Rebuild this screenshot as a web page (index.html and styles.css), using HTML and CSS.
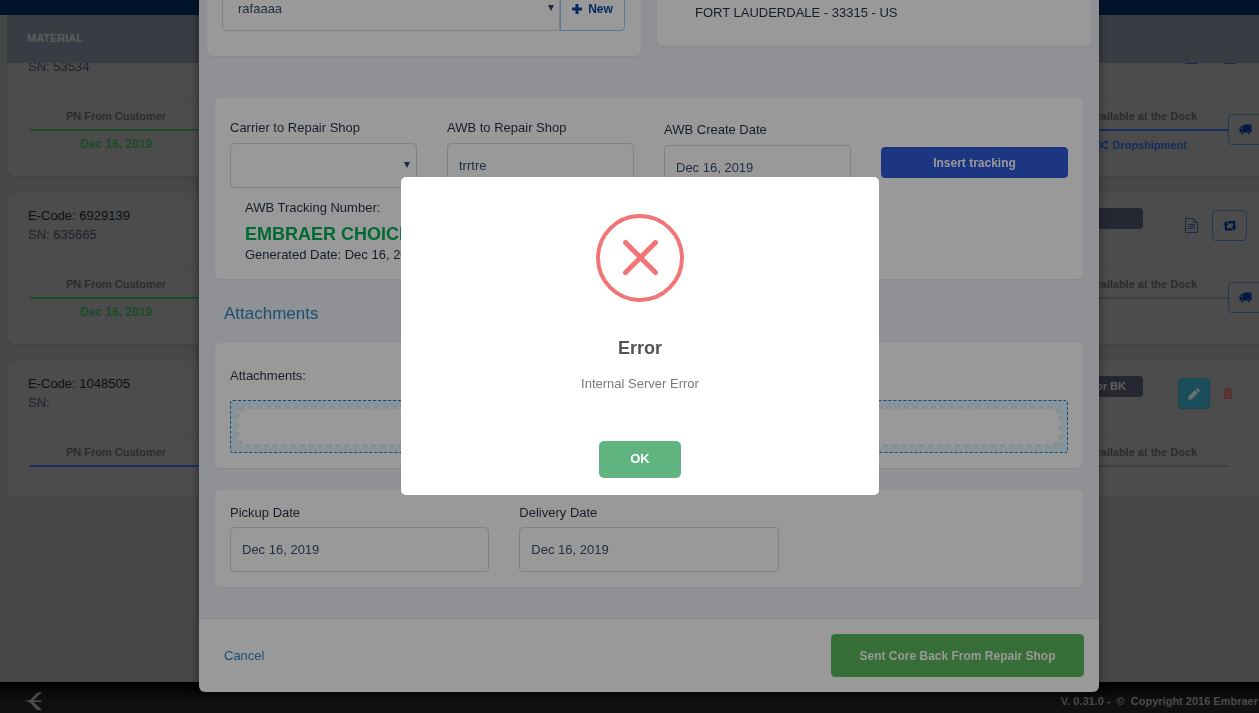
FILE: index.html
```html
<!DOCTYPE html>
<html lang="en">
<head>
<meta charset="utf-8">
<title>Core return</title>
<link rel="stylesheet" href="styles.css">
</head>
<body>
<svg class="sprite" aria-hidden="true">
  <symbol id="truck" viewBox="0 0 13 11"><path d="M4.500 0.500H12.500V8.500H.5V5L2.300 2H4.500ZM2.700 3.200 1.700 5H3.800V3.200Z" fill-rule="evenodd"/><circle cx="3.600" cy="8.800" r="1.500" stroke="#4c4c4c" stroke-width=".6"/><circle cx="9.600" cy="8.800" r="1.500" stroke="#4c4c4c" stroke-width=".6"/></symbol>
  <symbol id="doc" viewBox="0 0 13 15"><path d="M.5.500H8.500L12.500 4.500V14.500H.5ZM8.500.500V4.500H12.500M3 6.500H10M3 8.500H10M3 10.500H10" fill="none" stroke="currentColor"/></symbol>
  <symbol id="retweet" viewBox="0 0 14 10"><path d="M3 0 6 4H4V7H8L10 9.500H1.800V4H0ZM11 9.500 8 5.500H10V2.500H6L4.500 0H12.200V5.500H14Z"/></symbol>
  <symbol id="shuffle" viewBox="0 0 12 10"><path d="M0 2H2.500L7.500 8H10M0 8H2.500L7.500 2H10" fill="none" stroke="currentColor" stroke-width="1.500"/><path d="M9 0 12 2 9 4ZM9 6 12 8 9 10Z"/></symbol>
  <symbol id="pencil" viewBox="0 0 12 12"><path d="M0 12 .8 8.300 7 2.100 9.900 5 3.700 11.200ZM7.700 1.400 8.700.400Q9.300 0 9.900.500L11.500 2.100Q12 2.700 11.600 3.300L10.600 4.300Z"/></symbol>
  <symbol id="trash" viewBox="0 0 10 12"><path d="M3 2V.700H7V2M0 2.300H10" fill="none" stroke="currentColor" stroke-width="1.300"/><path d="M1 3.500H9V11H1ZM2.500 4.500V9.500H3.300V4.500ZM4.600 4.500V9.500H5.400V4.500ZM6.700 4.500V9.500H7.500V4.500Z" fill-rule="evenodd"/></symbol>
  <symbol id="caret" viewBox="0 0 6 6"><path d="M0 0H6L3 6Z"/></symbol>
</svg>

<div class="app">
  <div class="topbar"></div>
  <main class="board">
    <div class="board-head">MATERIAL</div>
    <article class="item first">
      <div class="item-top">
        <div class="codes"><span>&nbsp;</span><span class="sn">SN: 53534</span></div>
        <div class="tools"><button class="ghost" aria-label="Document"><svg class="i-doc"><use href="#doc"/></svg></button><button class="ghost" aria-label="Order"><svg class="i-doc"><use href="#doc"/></svg></button></div>
      </div>
      <div class="steps">
        <div class="step done"><b>PN From Customer</b><span>Dec 16, 2019</span></div>
        <div class="step active grow"></div>
        <div class="step active"><b>Available at the Dock</b><span class="drop"><svg class="i-shuffle"><use href="#shuffle"/></svg>Dropshipment</span></div>
        <button class="square" aria-label="Ship"><svg class="i-truck"><use href="#truck"/></svg></button>
      </div>
    </article>
    <article class="item">
      <div class="item-top">
        <div class="codes"><span>E-Code: 6929139</span><span class="sn">SN: 635665</span></div>
        <span class="badge"></span>
        <div class="tools"><button class="ghost" aria-label="Document"><svg class="i-doc"><use href="#doc"/></svg></button><button class="square" aria-label="Exchange"><svg class="i-retweet"><use href="#retweet"/></svg></button></div>
      </div>
      <div class="steps">
        <div class="step done"><b>PN From Customer</b><span>Dec 16, 2019</span></div>
        <div class="step grow"></div>
        <div class="step"><b>Available at the Dock</b></div>
        <button class="square" aria-label="Ship"><svg class="i-truck"><use href="#truck"/></svg></button>
      </div>
    </article>
    <article class="item short">
      <div class="item-top">
        <div class="codes"><span>E-Code: 1048505</span><span class="sn">SN:</span></div>
        <span class="badge">Vendor BK</span>
        <div class="tools"><button class="edit" aria-label="Edit"><svg class="i-pencil"><use href="#pencil"/></svg></button><button class="ghost delete" aria-label="Delete"><svg class="i-trash"><use href="#trash"/></svg></button></div>
      </div>
      <div class="steps">
        <div class="step active"><b>PN From Customer</b></div>
        <div class="step grow"></div>
        <div class="step"><b>Available at the Dock</b></div>
        <span class="spacer"></span>
      </div>
    </article>
  </main>
  <footer class="footer">
    <svg class="logo" viewBox="0 0 18 19" aria-label="Embraer"><path d="M0 9 5 8 12 1Q14 0 17 0L8.500 8.300H17L15.500 10H8.500L17 18Q13 19 11 17L5 10.500Z"/></svg>
    <span>V. 0.31.0 - &nbsp;©&nbsp; Copyright 2016 Embraer</span>
  </footer>
</div>

<div class="layer modal-layer">
  <form class="modal">
    <div class="modal-body">
      <div class="pair">
        <section class="card select-card">
          <div class="group">
            <div class="pick"><select aria-label="Repair shop"><option>rafaaaa</option></select><svg><use href="#caret"/></svg></div>
            <button type="button" class="new"><svg viewBox="0 0 10 10"><path d="M5 0V10M0 5H10" stroke="currentColor" stroke-width="3"/></svg>New</button>
          </div>
        </section>
        <section class="card address">FORT LAUDERDALE - 33315 - US</section>
      </div>

      <section class="card tracking">
        <div class="fields">
          <div class="field"><label for="carrier">Carrier to Repair Shop</label><div class="pick"><select id="carrier"><option></option></select><svg><use href="#caret"/></svg></div></div>
          <div class="field"><label for="awb">AWB to Repair Shop</label><input id="awb" type="text" value="trrtre"></div>
          <div class="field lower"><label for="created">AWB Create Date</label><input id="created" type="text" value="Dec 16, 2019"></div>
          <button type="button" class="insert">Insert tracking</button>
        </div>
        <div class="number"><span>AWB Tracking Number:</span><strong>EMBRAER CHOICE</strong><span>Generated Date: Dec 16, 2019</span></div>
      </section>

      <h2>Attachments</h2>
      <section class="card attach">
        <div>Attachments:</div>
        <div class="drop-outer"><div class="drop-inner"></div></div>
      </section>

      <section class="card dates">
        <div class="field"><label for="pickup">Pickup Date</label><input id="pickup" type="text" value="Dec 16, 2019"></div>
        <div class="field"><label for="delivery">Delivery Date</label><input id="delivery" type="text" value="Dec 16, 2019"></div>
      </section>
    </div>
    <div class="modal-foot">
      <a href="#cancel">Cancel</a>
      <button type="button" class="send">Sent Core Back From Repair Shop</button>
    </div>
  </form>
</div>

<div class="layer alert-layer">
  <div class="alert" role="alertdialog" aria-labelledby="alert-title">
    <svg class="cross" viewBox="0 0 88 88"><circle cx="44" cy="44" r="42"/><path d="M29.500 28.500 59.500 58.500M59.500 28.500 29.500 58.500"/></svg>
    <h1 id="alert-title">Error</h1>
    <p>Internal Server Error</p>
    <button type="button" class="ok">OK</button>
  </div>
</div>
</body>
</html>
```
FILE: styles.css
```css
* { box-sizing: border-box; }
body { margin: 0; overflow: hidden; font: 13px/20px "Liberation Sans", Arial, sans-serif; background: #464846; color: #171d28; }
button, input, select { font: inherit; color: inherit; margin: 0; }
svg { display: block; fill: currentColor; }
.sprite { position: absolute; width: 0; height: 0; }

/* Board behind the dialogs */
.app { min-height: 100vh; display: flex; flex-direction: column; }
.topbar { height: 15px; background: #00142b; }
.board { flex: 1; margin: 0 -21px 0 7px; }
.board-head { position: relative; z-index: 1; height: 48px; padding: 0 20px; border-radius: 3px 3px 0 0; background: #393c43; color: #5c5c5c; font-size: 11px; font-weight: bold; line-height: 47px; }
.item { height: 151px; margin: 0 0 17px 1px; border-radius: 5px; background: #4c4c4c; box-shadow: 0 1px 1px #414241; }
.item.first { margin-top: -38px; }
.item.short { height: 136px; }
.item-top { height: 73px; padding: 13px 20px 0; display: flex; align-items: flex-start; }
.codes { flex: 1; display: flex; flex-direction: column; line-height: 19px; color: #0d0f14; }
.codes .sn { color: #20222a; }
.badge { width: 130px; height: 21px; margin-top: 2px; padding-right: 17px; border-radius: 4px; background: #252833; color: #606060; font-size: 11px; font-weight: bold; line-height: 20px; text-align: right; }
.tools { width: 117px; display: flex; padding-left: 35px; margin-top: 4px; }
.tools button { height: 31px; padding: 0; border: 1px solid transparent; border-radius: 4px; display: grid; place-items: center; background: none; color: #1f2a48; }
.tools .ghost { width: 26px; }
.tools .ghost + .square { margin-left: 8px; }
.tools .ghost + .ghost { margin-left: 12px; }
.first .tools { margin-top: 3px; }
.tools .edit { width: 32px; background: #1b4e5b; border-color: #174652; color: #707070; }
.tools .ghost.delete { width: 36px; color: #5e2a28; }
button.square { width: 35px; height: 31px; padding: 0; border: 1px solid #29374d; border-radius: 4px; display: grid; place-items: center; background: none; color: #001942; }
.tools button.square { border-color: #29374d; color: #001942; }
.i-doc { width: 13px; height: 15px; }
.i-retweet { width: 14px; height: 10px; }
.i-truck { width: 13px; height: 11px; }
.i-pencil { width: 12px; height: 12px; }
.i-trash { width: 10px; height: 12px; }
.i-shuffle { width: 12px; height: 10px; }
.steps { margin: 0 12px; padding: 8px 5px 0 10px; height: 63px; display: flex; border-top: 1px solid #474747; border-radius: 5px; }
.step { width: 172px; display: grid; grid-template-rows: 22px 2px 1fr; font-size: 11px; text-align: center; color: #2c2c2c; }
.step.grow { flex: 1; }
.step b { grid-row: 1; line-height: 18px; }
.step::after { content: ""; grid-row: 2; background: #404040; }
.step > span { grid-row: 3; font-size: 12px; font-weight: bold; line-height: 26px; }
.step.done::after { background: #1a4b2b; }
.step.done > span { color: #1a4b2b; }
.step.active::after { background: #132e5e; }
.step .drop { display: flex; justify-content: center; align-items: center; gap: 3px; height: 27px; color: #132e5e; font-size: 11px; }
.steps .square { margin-top: 7px; }
.spacer { width: 35px; }
.footer { height: 31px; padding: 7px 1px 0 25px; display: flex; align-items: center; justify-content: space-between; background: linear-gradient(#000, #101011 60%); color: #4b4b4b; font-size: 11px; font-weight: bold; }
.logo { width: 18px; height: 19px; }

.layer { position: fixed; inset: 0; z-index: 2; display: flex; justify-content: center; }

/* Form dialog */
.modal-layer { align-items: flex-start; padding-left: 39px; overflow: hidden; }
.modal { width: 900px; max-width: 100%; margin-top: -30px; border-radius: 6px; overflow: hidden; background: #999; box-shadow: 0 3px 9px rgba(0, 0, 0, .5); }
.modal-body { padding: 0 16px 31px; background: #8f9194; }
.card { border-radius: 5px; background: #999; box-shadow: 0 1px 1px #87898c; }
.pair { display: grid; grid-template-columns: 1fr 1fr; align-items: start; gap: 16px; margin: 0 -8px; }
.select-card { height: 86px; padding: 16px 16px 0 15px; }
.address { height: 76px; padding: 33px 38px 0; }
.group { display: flex; }
.group .pick { flex: 1; }
.pick { position: relative; }
.pick svg { position: absolute; right: 7px; top: 19px; width: 6px; height: 6px; color: #1f2c3d; pointer-events: none; }
.pick select { appearance: none; }
.pick select, .field input { display: block; width: 100%; height: 45px; padding: 0 11px; border: 1px solid #7e8189; border-radius: 4px; background: transparent; color: #232e40; }
.group .pick select { padding-left: 15px; border-radius: 4px 0 0 4px; }
.group .pick svg { right: 6px; }
.new { width: 65px; padding: 0; display: flex; align-items: center; justify-content: center; gap: 6px; border: 1px solid #5f7796; border-radius: 0 4px 4px 0; background: none; color: #00295f; font-size: 12px; font-weight: bold; }
.new svg { width: 10px; height: 10px; }
.tracking { margin-top: 42px; height: 181px; padding: 20px 15px 0; }
.fields { display: grid; grid-template-columns: repeat(4, 1fr); gap: 30px; align-items: start; }
.field label { display: block; height: 25px; }
.field.lower { padding-top: 2px; }
.insert { height: 31px; margin-top: 29px; border: 1px solid #1a3380; border-radius: 4px; background: #1c3682; color: #999; font-size: 12px; font-weight: bold; }
.number { display: flex; flex-direction: column; padding: 8px 15px; }
.number strong { height: 27px; font-size: 18px; line-height: 33px; color: #006a34; }
h2 { margin: 22px 9px 17px; font-size: 17px; font-weight: normal; line-height: 25px; color: #1b4f74; }
.attach { height: 125px; padding: 23px 15px 0; }
.drop-outer { margin-top: 14px; height: 53px; padding: 5px; border: 1px dashed #0c4d7d; border-radius: 3px; background: #89939a; }
.drop-inner { height: 41px; border: 3px dashed #888f90; border-radius: 12px; background: #999; }
.dates { margin-top: 22px; height: 97px; padding: 13px 15px; display: grid; grid-template-columns: repeat(3, 1fr); gap: 30px; }
.dates label { height: 24px; }
.modal-foot { display: flex; align-items: center; justify-content: space-between; padding: 15px 15px 15px 25px; border-top: 1px solid #85878b; }
.modal-foot a { color: #194d77; text-decoration: none; }
.send { height: 43px; width: 253px; border: 1px solid #36753a; border-radius: 4px; background: #376e37; color: #999; font-size: 12px; font-weight: bold; }

/* Error dialog */
.alert-layer { padding: 0 0 41px 21px; align-items: center; }
.alert { width: 478px; height: 318px; padding: 37px 20px 17px; display: flex; flex-direction: column; align-items: center; border-radius: 5px; background: #fff; }
.cross { width: 88px; height: 88px; fill: none; stroke: #f27474; stroke-width: 4; stroke-linecap: round; }
.cross path { stroke-width: 5; }
.alert h1 { margin: 32px 0 10px; font-size: 18px; line-height: 28px; color: #545454; }
.alert p { margin: 0 0 auto; line-height: 24px; color: #797979; }
.ok { width: 82px; height: 37px; border: 0; border-radius: 5px; background: #5fb480; color: #fff; font-weight: bold; padding-bottom: 3px; }
```
